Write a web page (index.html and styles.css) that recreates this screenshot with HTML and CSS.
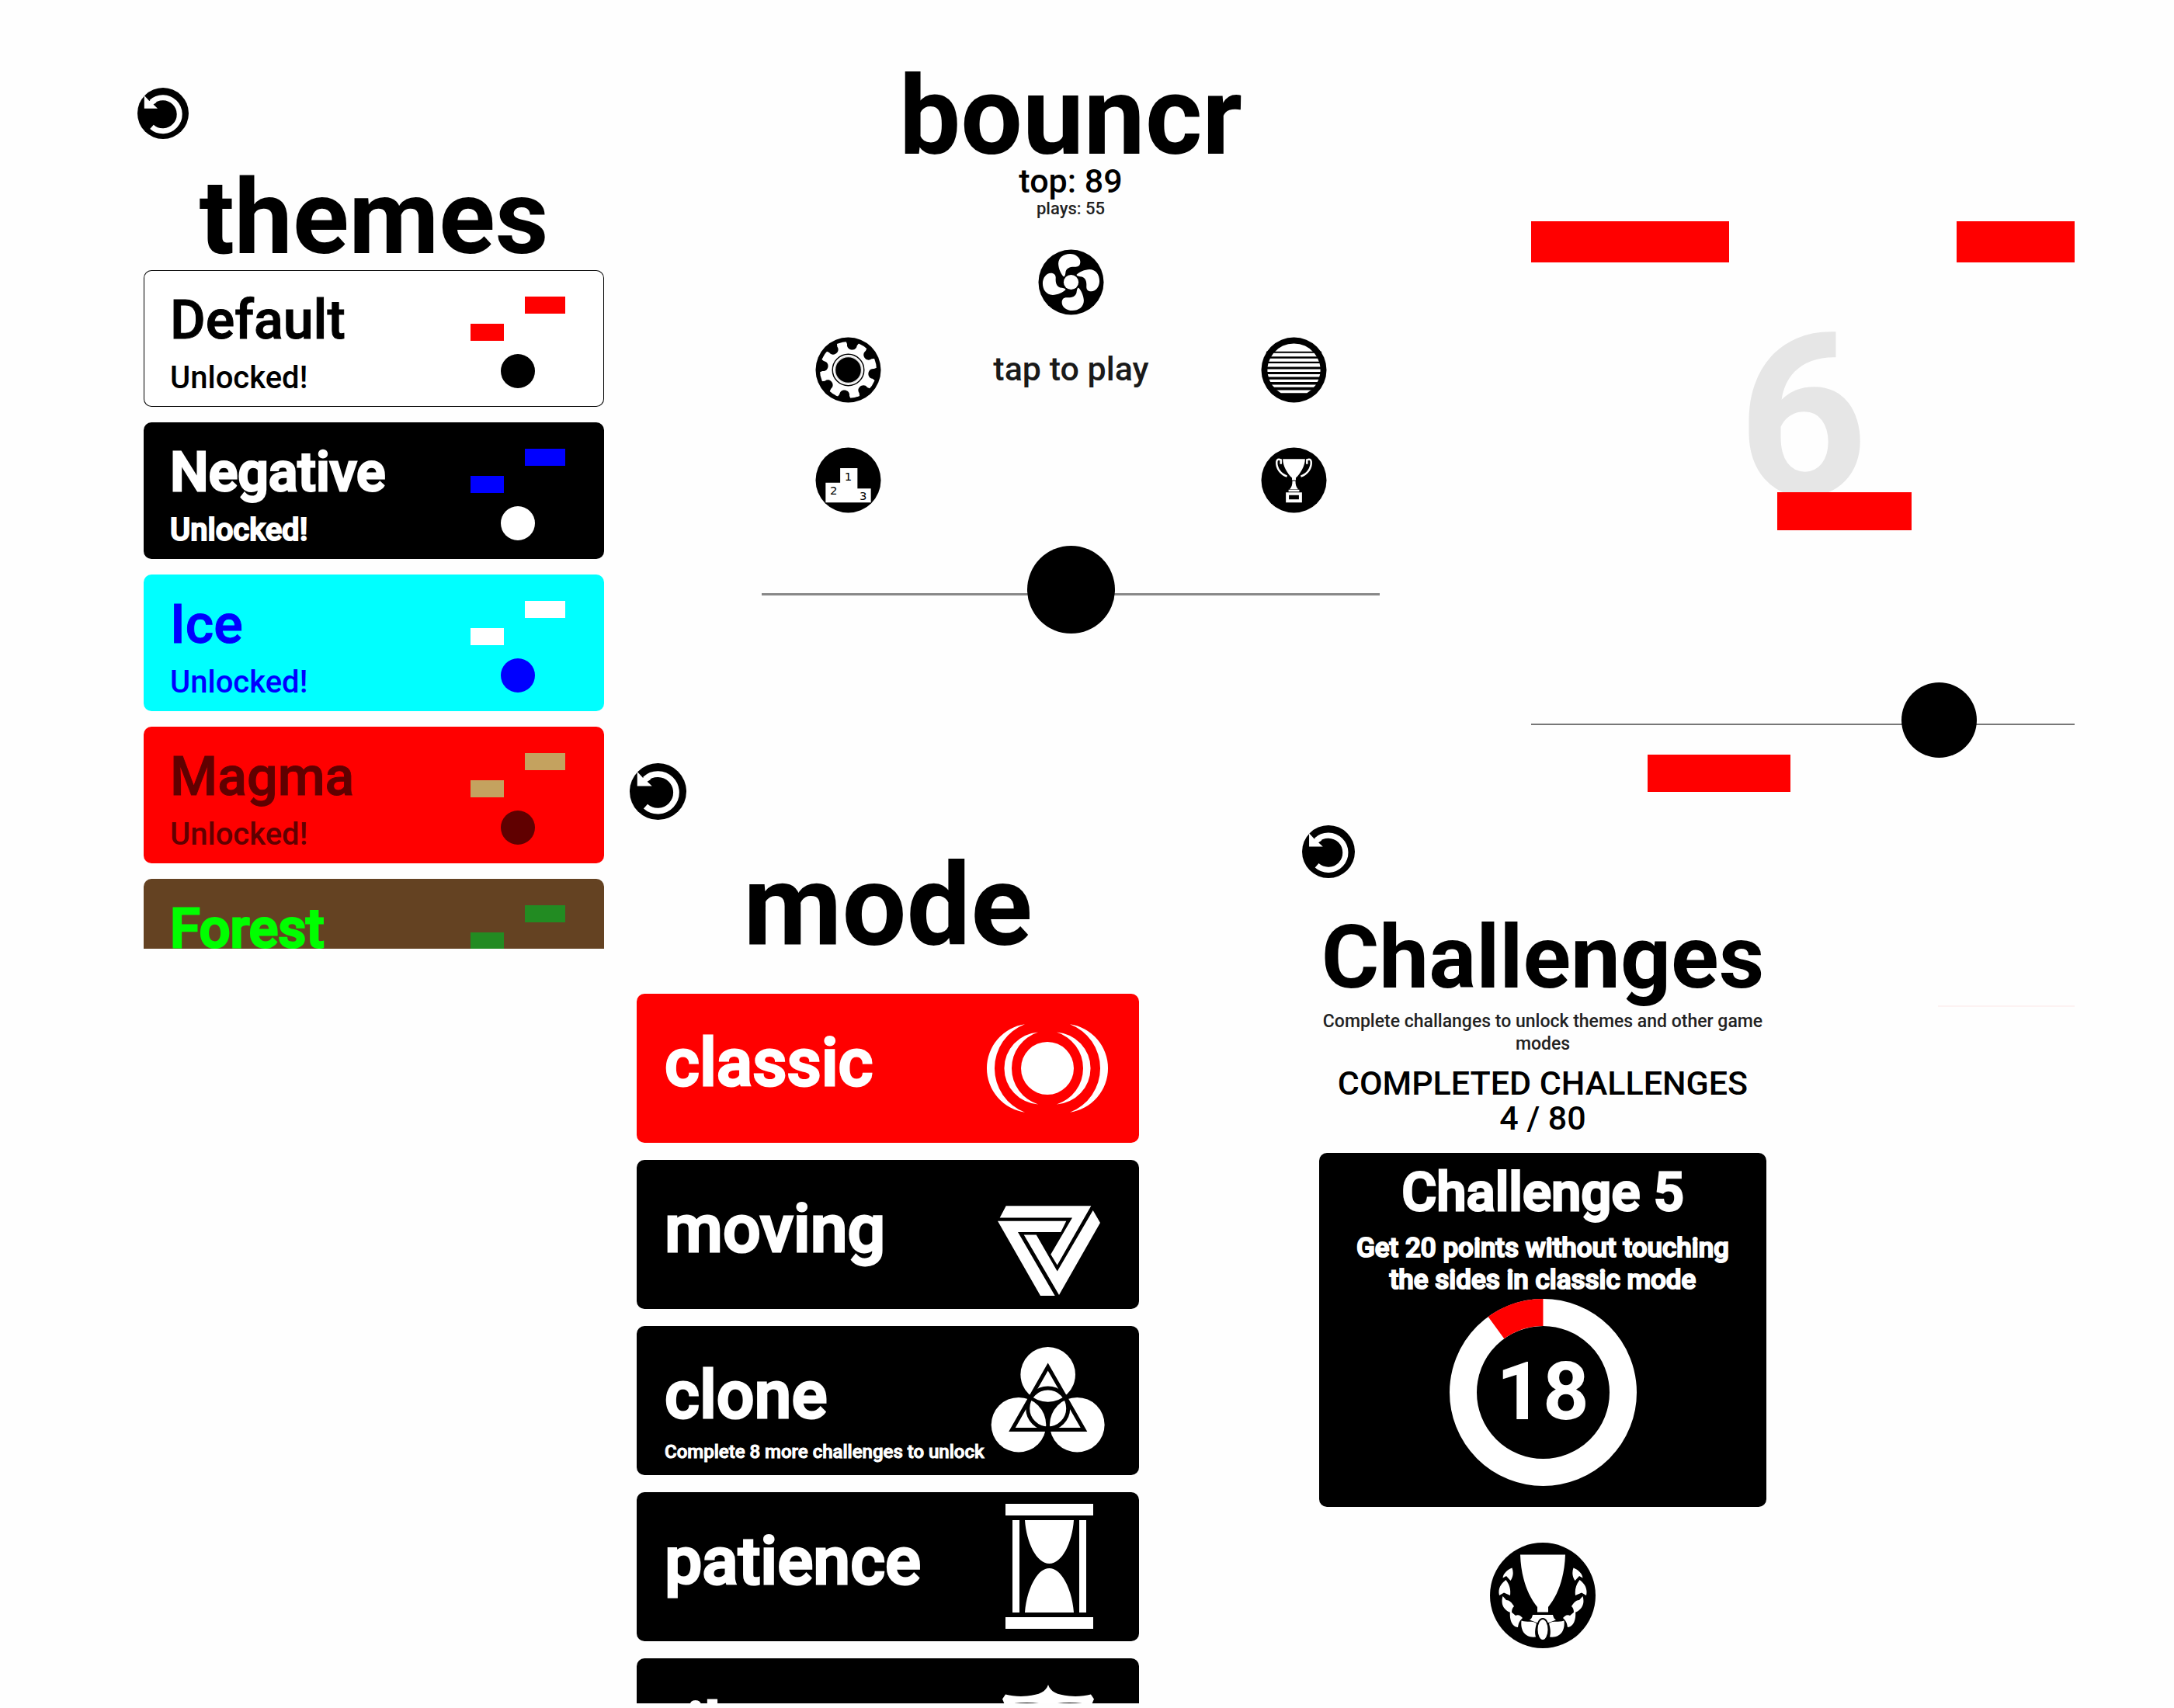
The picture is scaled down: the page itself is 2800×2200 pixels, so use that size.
FILE: index.html
```html
<!DOCTYPE html>
<html lang="en">
<head>
<meta charset="utf-8">
<meta name="viewport" content="width=device-width, initial-scale=1">
<title>bouncr</title>
<link rel="stylesheet" href="styles.css">
</head>
<body>
<svg class="defs" aria-hidden="true">
  <symbol id="back" viewBox="0 0 66 66">
    <circle cx="33" cy="33" r="33"/>
    <path d="M18.5 50.3A21.5 21.5 0 1 0 18 18.5" fill="none" stroke="#fff" stroke-width="7"/>
    <path d="M8.800 10l6.500 7 5.200-2 4 4-4 2.500 5.500 5.200H8.800z" fill="#fff"/>
  </symbol>
  <symbol id="preview" viewBox="0 0 122 118">
    <path d="M70 0h52v22H70zM0 35h43v22H0z" fill="var(--bar)"/>
    <circle cx="61" cy="96" r="22" fill="var(--ball)"/>
  </symbol>
</svg>

<main class="board">

  <section class="themes">
    <button class="back" type="button" aria-label="Back"><svg><use href="#back"/></svg></button>
    <h2 class="title">themes</h2>
    <ul class="theme-list">
      <li><button type="button" class="theme theme-default">
        <span class="theme-text"><span class="theme-name">Default</span><span class="theme-state">Unlocked!</span></span>
        <svg class="preview"><use href="#preview"/></svg>
      </button></li>
      <li><button type="button" class="theme theme-negative">
        <span class="theme-text"><span class="theme-name">Negative</span><span class="theme-state">Unlocked!</span></span>
        <svg class="preview"><use href="#preview"/></svg>
      </button></li>
      <li><button type="button" class="theme theme-ice">
        <span class="theme-text"><span class="theme-name">Ice</span><span class="theme-state">Unlocked!</span></span>
        <svg class="preview"><use href="#preview"/></svg>
      </button></li>
      <li><button type="button" class="theme theme-magma">
        <span class="theme-text"><span class="theme-name">Magma</span><span class="theme-state">Unlocked!</span></span>
        <svg class="preview"><use href="#preview"/></svg>
      </button></li>
      <li><button type="button" class="theme theme-forest">
        <span class="theme-text"><span class="theme-name">Forest</span><span class="theme-state">Unlocked!</span></span>
        <svg class="preview"><use href="#preview"/></svg>
      </button></li>
    </ul>
  </section>

  <section class="home">
    <h1 class="title">bouncr</h1>
    <p class="top-score">top: 89</p>
    <p class="plays">plays: 55</p>
    <button class="round swirl" type="button" aria-label="Themes">
      <svg viewBox="-43 -43 86 86">
        <circle r="42.500"/>
        <g fill="#fff">
          <circle r="9.700"/>
          <path id="blade" d="M-9.500-7C-13-10-16.500-18-16.600-24C-16.500-32-10-37-1.500-37C6-37 12-32 12-26.500C12-22 9.500-20 6-20C-1-20.500-5.500-19-7-14C-7.500-11-7.500-8-9.500-7z"/>
          <use href="#blade" transform="rotate(90)"/>
          <use href="#blade" transform="rotate(180)"/>
          <use href="#blade" transform="rotate(270)"/>
        </g>
      </svg>
    </button>
    <div class="menu-row">
      <button class="round" type="button" aria-label="Settings">
        <svg viewBox="-43 -43 86 86">
          <circle r="42.500"/>
          <circle r="37" fill="#fff"/>
          <g transform="rotate(8.600)">
            <g id="notches">
              <path id="notch" d="M-6.500-33C-6.500-24.500 6.500-24.500 6.500-33L10-39H-10z"/>
              <use href="#notch" transform="rotate(90)"/>
              <use href="#notch" transform="rotate(180)"/>
              <use href="#notch" transform="rotate(270)"/>
            </g>
            <use href="#notches" transform="rotate(45)"/>
          </g>
          <circle r="20.500" fill="none" stroke="#000" stroke-width="1.500"/>
          <circle r="18" fill="#ddd"/>
          <circle r="16.500"/>
        </svg>
      </button>
      <button class="play" type="button">tap to play</button>
      <button class="round" type="button" aria-label="Mode">
        <svg viewBox="-43 -43 86 86">
          <circle r="42.500"/>
          <path d="M-17 30A34.500 34.500 0 1 1 17 30z" fill="#fff"/>
          <path d="M-36-24h72v2h-72zM-36-17.500h72v2.500h-72zM-36-11h72v2.500h-72zM-36-4h72v3h-72zM-36 2.500h72v3h-72zM-36 9h72v3.300h-72zM-36 15.800h72v3.500h-72zM-33 22.500h66v3.700h-66z"/>
        </svg>
      </button>
    </div>
    <div class="menu-row menu-row-low">
      <button class="round" type="button" aria-label="Leaderboard">
        <svg viewBox="-43 -43 86 86">
          <circle r="42.500"/>
          <path d="M-29.500 3.300h19v-19H12v26.500h17.500V29h-59z" fill="#fff"/>
          <g class="podium-number"><text x="0" y="0">1</text><text x="-19" y="18.500">2</text><text x="19.500" y="26">3</text></g>
        </svg>
      </button>
      <button class="round" type="button" aria-label="Challenges">
        <svg viewBox="-43 -43 86 86">
          <circle r="42.500"/>
          <g fill="#fff">
            <path d="M-14.500-27.500h29C14.500-18 8-8 2.500-3v3h-5v-3C-8-8-14.500-18-14.500-27.500z"/>
            <path d="M-2 1h4c0 5 1 8 3.500 11h-11C-3 9-2 6-2 1zM-7 12.500H7V15H-7zM-10.500 16h21v13h-21z"/>
          </g>
          <path d="M-17-21v-5.500q-5-2-5.500 2.500C-23-16-18-8-9-5M17-21v-5.500q5-2 5.500 2.500C23-16 18-8 9-5" fill="none" stroke="#fff" stroke-width="2.500"/>
          <path d="M-6.500 19.500h13v5.500h-13z"/>
        </svg>
      </button>
    </div>
    <div class="stage"><span class="ball"></span></div>
  </section>

  <section class="game" aria-label="Game">
    <p class="score">6</p>
    <span class="bar bar-a"></span>
    <span class="bar bar-b"></span>
    <span class="bar bar-c"></span>
    <span class="bar bar-d"></span>
    <span class="floor"></span>
    <span class="player"></span>
  </section>

  <section class="modes">
    <button class="back" type="button" aria-label="Back"><svg><use href="#back"/></svg></button>
    <h2 class="title">mode</h2>
    <ul class="mode-list">
      <li><button type="button" class="mode mode-active">
        <span class="mode-text"><span class="mode-name">classic</span></span>
        <svg class="mode-icon" viewBox="-79 -96 160 192">
          <circle r="34"/>
          <path id="waves" d="M-29-56.700A57.300 57.300 0 0 0-29 56.700A60.700 60.700 0 0 1-29-56.700zM-12-46.500A46.600 46.600 0 0 0-12 46.500A48.800 48.800 0 0 1-12-46.500z"/>
          <use href="#waves" transform="scale(-1 1)"/>
        </svg>
      </button></li>
      <li><button type="button" class="mode">
        <span class="mode-text"><span class="mode-name">moving</span></span>
        <svg class="mode-icon" viewBox="30 204 160 192">
          <path d="M47.700 278.600L55.700 263.300H165.300L121.700 339.500L113.300 325.700L141 278.600zM45 282.800H133.300L126.300 297H71L118.700 378.900H100zM78.700 300.400H94.700L121.700 347.500L167.700 269L177 285L124 378z"/>
        </svg>
      </button></li>
      <li><button type="button" class="mode">
        <span class="mode-text"><span class="mode-name">clone</span><span class="mode-note">Complete 8 more challenges to unlock</span></span>
        <svg class="mode-icon" viewBox="30 418 160 192">
          <circle cx="109.700" cy="480.400" r="35.300"/><circle cx="72" cy="545.200" r="35.300"/><circle cx="147.300" cy="545.200" r="35.300"/>
          <g fill="none" stroke="#000" stroke-width="5"><circle cx="109.700" cy="524" r="26"/><path d="M109.700 470.500L63.500 551.500H156z"/></g>
        </svg>
      </button></li>
      <li><button type="button" class="mode">
        <span class="mode-text"><span class="mode-name">patience</span></span>
        <svg class="mode-icon" viewBox="0 0 160 192">
          <path d="M25 15h113v15H25zM25 161h113v15H25zM34 36h9v119h-9zM120 36h9v119h-9zM50 36h63C111 65 98 92 81.500 92S52 65 50 36zM50 155h63C111 127 98 98 81.500 98S52 127 50 155z"/>
        </svg>
      </button></li>
      <li><button type="button" class="mode">
        <span class="mode-text"><span class="mode-name">tilt</span></span>
        <svg class="mode-icon" viewBox="0 0 160 192">
          <path d="M80 34c3 9 11 13 27 14.500 10 1 20 0 28-2l4 6-3 7v35c0 35-26 60-56 75-30-15-56-40-56-75v-35l-3-7 4-6c8 2 18 3 28 2C69 47 77 43 80 34z"/>
          <path d="M36 58q17-2 32 0v60H36zM92 58q15-2 32 0v60H92z" fill="#000"/>
        </svg>
      </button></li>
    </ul>
  </section>

  <section class="challenges">
    <button class="back" type="button" aria-label="Back"><svg><use href="#back"/></svg></button>
    <h2 class="title">Challenges</h2>
    <p class="intro">Complete challanges to unlock themes and other game modes</p>
    <p class="progress">COMPLETED CHALLENGES<br>4 / 80</p>
    <article class="challenge">
      <h3 class="challenge-name">Challenge 5</h3>
      <p class="challenge-goal">Get 20 points without touching the sides in classic mode</p>
      <svg class="ring" viewBox="0 0 241 241" role="img" aria-label="18 of 20">
        <circle class="ring-track" cx="120.500" cy="120.500" r="103"/>
        <circle class="ring-rest" cx="120.500" cy="120.500" r="103" pathLength="100"/>
        <text class="ring-value" x="120" y="155">18</text>
      </svg>
    </article>
    <button class="trophies" type="button" aria-label="Completed challenges">
      <svg viewBox="-68 -68 136 136">
        <circle r="68"/>
        <g fill="#fff">
          <path d="M-29-52.500h58C28-24 20-1 7 15v6.500H-7V15C-20-1-28-24-29-52.500z"/>
          <path d="M-13 25h26q1 5 4 6.500L8 35H-8l-9-3.500Q-14 30-13 25z"/>
          <g id="leaves">
            <path d="M-39.500-35.500C-46-33-51-28-51.500-22.500L-47-25L-41.500-19C-38-24-37.500-30-39.500-35.500z"/>
            <path d="M-47.500-20C-54-15-58-9-56 0L-50-3.500L-42 0C-41-8-43-14-47.500-20z"/>
            <path d="M-51.500 1C-54 9-52 19-40 22.500C-40 18-39 16-37 14C-40 9-43 6-47 6z"/>
            <path d="M-42 20C-43 29-41 40-32 41C-31 36-31 34-26 29C-28 27-31 24-35 26z"/>
            <path d="M-27.500 32.500C-29 45-23 55-9 53.500C-11 47-9 40-8 36C-14 32-20 35-27.500 32.500z"/>
          </g>
          <use href="#leaves" transform="scale(-1 1)"/>
          <ellipse cy="44" rx="7.500" ry="14" stroke="#000" stroke-width="2"/>
        </g>
      </svg>
    </button>
  </section>

  <hr class="rule">
</main>
</body>
</html>
```
FILE: styles.css
```css
* { box-sizing: border-box; }

body {
  margin: 0;
  background: #fefefe;
  color: #000;
  font-family: Roboto, "Liberation Sans", sans-serif;
  font-weight: 500;
}

h1, h2, h3, p, ul { margin: 0; padding: 0; }
ul { list-style: none; }

button {
  display: block;
  padding: 0;
  border: 0;
  background: none;
  color: inherit;
  font: inherit;
  text-align: left;
  cursor: pointer;
}

svg { display: block; }
.defs { position: absolute; width: 0; height: 0; }

/* The five screens share one grid; several of them overlap in rows and columns. */
.board {
  display: grid;
  grid-template-columns:
    [themes] 778fr [themes-end] 33fr [modes] 170fr [home] 486fr [modes-end]
    210fr [challenges] 100fr [home-end] 195fr [game] 303fr [challenges-end]
    221fr [rule] 176fr [game-end] 128fr;
  grid-template-rows: 983px 80px 1fr;
  min-height: 100vh;
}

.title { font-weight: 700; text-align: center; }
.back svg { width: 100%; height: 100%; }

/* Themes */
.themes {
  grid-column: themes / themes-end;
  grid-row: 1 / 4;
  padding: 113px 0 0 185px;
}
.themes .back { width: 66px; height: 66px; margin-left: -8px; }
.themes .title { margin: 37px 0 2px; font-size: 134px; line-height: 130px; }
.theme-list {
  display: flex;
  flex-direction: column;
  gap: 20px;
  height: 874px;
  overflow: hidden;
}
.theme {
  display: flex;
  justify-content: space-between;
  align-items: flex-start;
  width: 100%;
  height: 176px;
  padding: 29px 50px 0 34px;
  border-radius: 10px;
  color: var(--ball);
  background: var(--paper);
  -webkit-text-stroke: 1px var(--ball);
}
.theme-text { display: flex; flex-direction: column; gap: 20px; }
.theme-name { font-size: 70px; line-height: 70px; }
.theme-state { font-size: 40px; line-height: 40px; -webkit-text-stroke-width: 0; }
.preview { width: 122px; height: 118px; margin-top: 5px; }

.theme-default { --paper: #fff; --ball: #000; --bar: #f00; box-shadow: inset 0 0 0 1px #000; }
.theme-negative { --paper: #000; --ball: #fff; --bar: #00f; -webkit-text-stroke-width: 3px; }
.theme-negative .theme-state { -webkit-text-stroke-width: 2px; }
.theme-ice { --paper: #0ff; --ball: #00f; --bar: #fff; }
.theme-magma { --paper: #f00; --ball: #600000; --bar: #c4a25f; }
.theme-forest { --paper: #644222; --ball: #0f0; --bar: #228b22; -webkit-text-stroke-width: 3px; }

/* Home */
.home {
  grid-column: home / home-end;
  grid-row: 1;
  display: flex;
  flex-direction: column;
  align-items: center;
  padding-top: 90px;
}
.home .title { font-size: 141px; line-height: 120px; }
.top-score { margin-top: 2px; font-size: 43px; line-height: 42px; }
.plays { margin-top: 3px; font-size: 22px; line-height: 24px; color: #222; }
.round { width: 85px; height: 85px; }
.round svg { width: 100%; height: 100%; }
.swirl { margin: 40px 0 28px; }
.menu-row {
  display: flex;
  justify-content: space-between;
  align-items: center;
  width: 100%;
  padding: 0 68px 0 69px;
}
.menu-row-low { margin-top: 57px; }
.play { padding-bottom: 4px; font-size: 43px; line-height: 44px; color: #1a1a1a; }
.podium-number { font: 15px "DejaVu Sans", sans-serif; text-anchor: middle; }
.stage {
  display: flex;
  justify-content: center;
  align-self: stretch;
  margin-top: 42px;
  background: linear-gradient(#888, #888) 0 61px / 100% 3px no-repeat;
}
.ball { width: 113px; height: 113px; border-radius: 50%; background: #000; }

/* Game in play: pieces sit at free positions on the field */
.game {
  grid-column: game / game-end;
  grid-row: 1 / 3;
  position: relative;
}
.game > * { position: absolute; }
.score {
  top: 391px;
  left: 0;
  right: 0;
  text-align: center;
  font-size: 292px;
  line-height: 292px;
  font-weight: 700;
  color: #e6e6e6;
}
.bar { background: #f00; }
.bar-a { left: 0; top: 285px; width: 255px; height: 53px; }
.bar-b { right: 0; top: 285px; width: 152px; height: 53px; }
.bar-c { left: 317px; top: 634px; width: 173px; height: 49px; }
.bar-d { left: 150px; top: 972px; width: 184px; height: 48px; }
.floor { left: 0; right: 0; top: 932px; height: 2px; background: #777; }
.player { left: 477px; top: 879px; width: 97px; height: 97px; border-radius: 50%; background: #000; }

/* Modes */
.modes {
  grid-column: modes / modes-end;
  grid-row: 2 / 4;
  padding-left: 9px;
}
.modes .back { width: 73px; height: 73px; margin-left: -9px; }
.modes .title { margin: 40px 0 41px; font-size: 147px; line-height: 143px; }
.mode-list {
  display: flex;
  flex-direction: column;
  gap: 22px;
  height: 914px;
  overflow: hidden;
}
.mode {
  display: flex;
  justify-content: space-between;
  width: 100%;
  height: 192px;
  padding-right: 37px;
  padding-left: 36px;
  border-radius: 10px;
  background: #000;
  color: #fff;
}
.mode-active { background: #f00; }
.mode-text { display: flex; flex-direction: column; gap: 17px; width: 0; padding-top: 47px; white-space: nowrap; }
.mode-name { font-size: 86px; line-height: 84px; -webkit-text-stroke: 3px #fff; }
.mode-note { font-size: 24px; line-height: 28px; -webkit-text-stroke: 1px #fff; }
.mode-icon { width: 160px; height: 192px; fill: #fff; }

/* Challenges */
.challenges {
  grid-column: challenges / challenges-end;
  grid-row: 3;
  padding-left: 22px;
  text-align: center;
}
.challenges .back { width: 68px; height: 68px; margin-left: -22px; }
.challenges .title { margin-top: 46px; font-size: 114px; line-height: 112px; }
.intro { margin-top: 12px; font-size: 23px; line-height: 29px; color: #222; }
.progress { margin-top: 14px; font-size: 43px; line-height: 45px; }
.challenge {
  margin-top: 22px;
  padding: 17px 40px 27px;
  border-radius: 10px;
  background: #000;
  color: #fff;
}
.challenge-name { font-size: 69px; line-height: 68px; font-weight: 500; -webkit-text-stroke: 3px #fff; }
.challenge-goal { margin-top: 17px; font-size: 35px; line-height: 41px; -webkit-text-stroke: 2px #fff; }
.ring { width: 241px; height: 241px; margin: 4px auto 0; }
.ring circle { fill: none; stroke-width: 35px; }
.ring-track { stroke: #fff; }
.ring-rest { stroke: #f00; stroke-dasharray: 10 90; transform: rotate(-126deg); transform-origin: center; }
.ring-value { font-size: 104px; font-weight: 700; fill: #fff; text-anchor: middle; }
.trophies { width: 136px; height: 136px; margin: 46px auto 0; }
.trophies svg { width: 100%; height: 100%; }

.rule {
  grid-column: rule / game-end;
  grid-row: 3;
  align-self: start;
  width: 100%;
  margin: 232px 0 0;
  border: 0;
  border-top: 2px solid #fdf2f2;
}
```
